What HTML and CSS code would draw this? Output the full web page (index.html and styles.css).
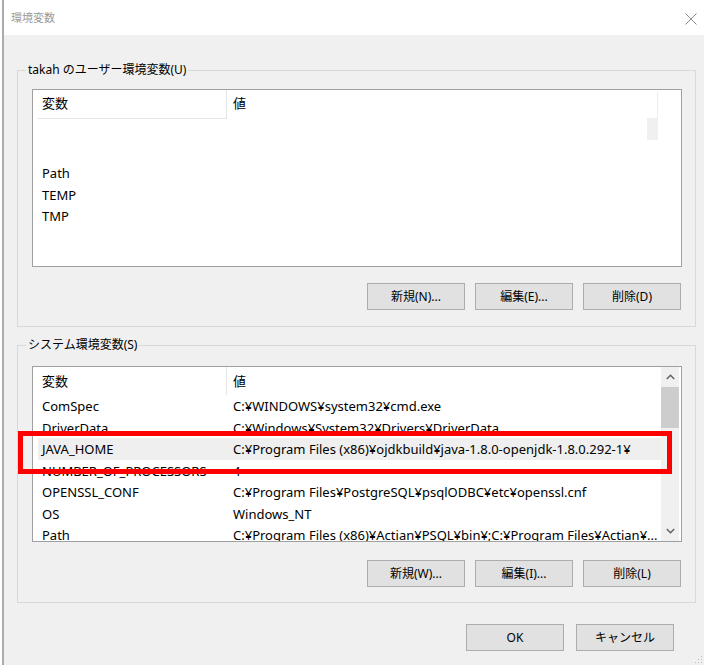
FILE: index.html
```html
<!DOCTYPE html>
<html lang="ja">
<head>
<meta charset="utf-8">
<title>環境変数</title>
<link rel="stylesheet" href="styles.css">
</head>
<body>
<div class="window">
  <div class="titlebar">
    <span class="title">環境変数</span>
    <svg class="close" width="12" height="12" viewBox="0 0 12 12"><path d="M0.5 0.5 L11.5 11.5 M11.5 0.5 L0.5 11.5" stroke="#8c8c8c" stroke-width="1" fill="none"/></svg>
  </div>
  <div class="client">
    <fieldset class="group group-user">
      <legend>takah のユーザー環境変数(U)</legend>
      <div class="list list-user">
        <div class="list-main">
          <div class="list-head head-user">
            <div class="col-name">変数</div>
            <div class="col-value">値</div>
          </div>
          <div class="row"><div class="col-name"></div><div class="col-value"></div></div>
          <div class="row"><div class="col-name"></div><div class="col-value"></div></div>
          <div class="row"><div class="col-name">Path</div><div class="col-value"></div></div>
          <div class="row"><div class="col-name">TEMP</div><div class="col-value"></div></div>
          <div class="row"><div class="col-name">TMP</div><div class="col-value"></div></div>
        </div>
        <div class="ghost-line"></div>
        <div class="ghost-thumb"></div>
      </div>
      <div class="btn-row">
        <button class="btn">新規(N)...</button>
        <button class="btn">編集(E)...</button>
        <button class="btn">削除(D)</button>
      </div>
    </fieldset>

    <fieldset class="group group-system">
      <legend>システム環境変数(S)</legend>
      <div class="list list-system">
        <div class="list-main">
          <div class="list-head">
            <div class="col-name">変数</div>
            <div class="col-value">値</div>
          </div>
          <div class="row"><div class="col-name">ComSpec</div><div class="col-value">C:¥WINDOWS¥system32¥cmd.exe</div></div>
          <div class="row"><div class="col-name">DriverData</div><div class="col-value">C:¥Windows¥System32¥Drivers¥DriverData</div></div>
          <div class="row row-selected"><div class="col-name">JAVA_HOME</div><div class="col-value">C:¥Program Files (x86)¥ojdkbuild¥java-1.8.0-openjdk-1.8.0.292-1¥</div></div>
          <div class="row"><div class="col-name">NUMBER_OF_PROCESSORS</div><div class="col-value">4</div></div>
          <div class="row"><div class="col-name">OPENSSL_CONF</div><div class="col-value">C:¥Program Files¥PostgreSQL¥psqlODBC¥etc¥openssl.cnf</div></div>
          <div class="row"><div class="col-name">OS</div><div class="col-value">Windows_NT</div></div>
          <div class="row"><div class="col-name">Path</div><div class="col-value">C:¥Program Files (x86)¥Actian¥PSQL¥bin¥;C:¥Program Files¥Actian¥...</div></div>
        </div>
        <div class="scrollbar">
          <div class="sb-arrow">
            <svg width="9" height="6" viewBox="0 0 9 6"><path d="M0.8 5 L4.5 1.2 L8.2 5" stroke="#606060" stroke-width="1.4" fill="none"/></svg>
          </div>
          <div class="sb-thumb"></div>
          <div class="sb-track"></div>
          <div class="sb-arrow">
            <svg width="9" height="6" viewBox="0 0 9 6"><path d="M0.8 1 L4.5 4.8 L8.2 1" stroke="#606060" stroke-width="1.4" fill="none"/></svg>
          </div>
        </div>
      </div>
      <div class="btn-row btn-row-system">
        <button class="btn">新規(W)...</button>
        <button class="btn">編集(I)...</button>
        <button class="btn">削除(L)</button>
      </div>
    </fieldset>

    <div class="footer">
      <button class="btn">OK</button>
      <button class="btn">キャンセル</button>
    </div>
  </div>
  <div class="highlight-box"></div>
  <svg class="grip" width="8" height="8" viewBox="0 0 8 8">
    <rect x="6" y="0" width="1" height="1" fill="#bdbdbd"/>
    <rect x="3" y="3" width="1" height="1" fill="#bdbdbd"/>
    <rect x="6" y="3" width="1" height="1" fill="#bdbdbd"/>
    <rect x="0" y="6" width="1" height="1" fill="#bdbdbd"/>
    <rect x="3" y="6" width="1" height="1" fill="#bdbdbd"/>
    <rect x="6" y="6" width="1" height="1" fill="#bdbdbd"/>
  </svg>
</div>
</body>
</html>
```

FILE: styles.css
```css
* {
  box-sizing: border-box;
}

html,
body {
  margin: 0;
  padding: 0;
  background: #ffffff;
}

body {
  width: 704px;
  height: 665px;
  overflow: hidden;
  font-family: "Noto Sans", "Noto Sans CJK JP", sans-serif;
  font-size: 12px;
  color: #000000;
}

.window {
  position: relative;
  margin-left: 2px;
  border-left: 2px solid #ababab;
  height: 665px;
  background: #f0f0f0;
  display: flex;
  flex-direction: column;
}

.titlebar {
  height: 35px;
  flex: 0 0 35px;
  background: #ffffff;
  display: flex;
  align-items: center;
  justify-content: space-between;
  padding: 0 7px 0 7px;
}

.title {
  color: #9a9a9a;
  font-size: 11px;
  line-height: 16px;
}

.close {
  display: block;
  margin-top: 2px;
}

.client {
  padding: 26px 8px 0 13px;
}

.group {
  margin: 0;
  min-width: 0;
  border: 1px solid #d9d9d9;
  padding: 10px 13px 16px 14px;
}

.group legend {
  margin-left: -6px;
  padding: 0 2px;
  line-height: 18px;
  height: 18px;
}

.group-system {
  margin-top: 9px;
  padding-top: 12px;
  padding-bottom: 15px;
}

.list {
  position: relative;
  background: #ffffff;
  border: 1px solid #a0a0a0;
  display: flex;
  overflow: hidden;
  font-size: 13px;
}

.list-user {
  height: 178px;
}

.list-system {
  height: 176px;
}

.list-main {
  flex: 1 1 auto;
  min-width: 0;
  padding-left: 5px;
}

.list-head {
  display: flex;
  height: 28px;
  align-items: stretch;
}

.list-head .col-name {
  border-right: 1px solid #e5e5e5;
  line-height: 28px;
}

.list-head .col-value {
  line-height: 28px;
}

.head-user {
  height: 29px;
}

.head-user .col-name {
  border-bottom: 1px solid #e5e5e5;
  line-height: 27px;
}

.head-user .col-value {
  line-height: 27px;
}

.col-name {
  flex: 0 0 189px;
  padding-left: 4px;
  white-space: nowrap;
  overflow: hidden;
}

.col-value {
  flex: 1 1 auto;
  min-width: 0;
  padding-left: 6px;
  padding-right: 4px;
  white-space: nowrap;
  overflow: hidden;
}

.row {
  display: flex;
  height: 21.5px;
  line-height: 23px;
}

.row-selected {
  background: #efefef;
}

.ghost-line {
  position: absolute;
  left: 624px;
  top: 2px;
  width: 1px;
  height: 48px;
  background: #ececec;
}

.ghost-thumb {
  position: absolute;
  left: 614px;
  top: 28px;
  width: 11px;
  height: 22px;
  background: #f0f0f0;
}

.scrollbar {
  flex: 0 0 18px;
  margin-right: 2px;
  background: #f0f0f0;
  display: flex;
  flex-direction: column;
}

.sb-arrow {
  height: 20px;
  flex: 0 0 20px;
  display: flex;
  align-items: center;
  justify-content: center;
}

.sb-thumb {
  height: 41px;
  flex: 0 0 41px;
  background: #cdcdcd;
}

.sb-track {
  flex: 1 1 auto;
}

.btn-row {
  display: flex;
  justify-content: flex-end;
  gap: 10px;
  margin-top: 16px;
  padding-right: 1px;
}

.btn-row-system {
  margin-top: 18px;
}

.btn {
  width: 98px;
  height: 27px;
  margin: 0;
  padding: 0;
  background: #e1e1e1;
  border: 1px solid #adadad;
  border-radius: 0;
  font-family: "Noto Sans", "Noto Sans CJK JP", sans-serif;
  font-size: 12px;
  color: #000000;
  line-height: 25px;
}

.footer {
  display: flex;
  justify-content: flex-end;
  gap: 12px;
  margin-top: 21px;
  padding-right: 22px;
}

.highlight-box {
  position: absolute;
  left: 14px;
  top: 431px;
  width: 654px;
  height: 43px;
  border: 5px solid #ff0000;
}

.grip {
  position: absolute;
  right: 1px;
  bottom: 1px;
}
```
